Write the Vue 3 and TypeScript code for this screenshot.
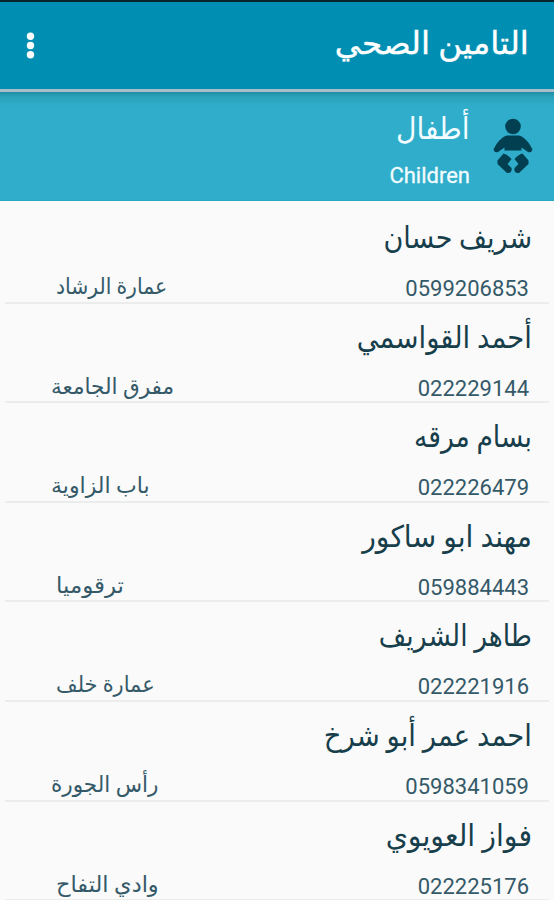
<script setup lang="ts">
interface Contact {
  name: string
  phone: string
  place: string
  inset: number
  nameStretch: number
  placeStretch: number
}

const contacts: Contact[] = [
  { name: 'شريف حسان', phone: '0599206853', place: 'عمارة الرشاد', inset: 56, nameStretch: 0.9, placeStretch: 0.925 },
  { name: 'أحمد القواسمي', phone: '022229144', place: 'مفرق الجامعة', inset: 51, nameStretch: 0.916, placeStretch: 0.98 },
  { name: 'بسام مرقه', phone: '022226479', place: 'باب الزاوية', inset: 51, nameStretch: 0.885, placeStretch: 1 },
  { name: 'مهند ابو ساكور', phone: '059884443', place: 'ترقوميا', inset: 56, nameStretch: 0.942, placeStretch: 1.04 },
  { name: 'طاهر الشريف', phone: '022221916', place: 'عمارة خلف', inset: 56, nameStretch: 0.885, placeStretch: 0.95 },
  { name: 'احمد عمر أبو شرخ', phone: '0598341059', place: 'رأس الجورة', inset: 51, nameStretch: 0.916, placeStretch: 0.98 },
  { name: 'فواز العويوي', phone: '022225176', place: 'وادي التفاح', inset: 56, nameStretch: 0.945, placeStretch: 1.02 },
]
</script>

<template>
  <main class="screen" dir="rtl">
    <header class="bar">
      <h1 class="title">التامين الصحي</h1>
      <svg class="more" viewBox="0 0 10 28" aria-hidden="true">
        <circle cx="5.5" cy="4.2" r="3.7" />
        <circle cx="5.5" cy="13.500" r="3.7" />
        <circle cx="5.5" cy="22.8" r="3.7" />
      </svg>
    </header>
    <section class="category">
      <svg class="baby" viewBox="0 0 40 56" aria-hidden="true">
        <circle cx="20" cy="8.5" r="7.8" />
        <path d="M14 17.500H26C32 19 37 26 39.500 31.500Q38.500 35 35 34L28.500 29.500V32.500H11.500V29.500L5 34Q1.500 35 0.500 31.500C3 26 8 19 14 17.500Z" />
        <path d="M10.500 35.500Q14 36 18.500 41L14.500 46L18.500 50Q19.500 55.500 14 55L4.500 46V42.500Z" />
        <path d="M29.500 35.500Q26 36 21.500 41L25.500 46L21.500 50Q20.500 55.500 26 55L35.500 46V42.500Z" />
      </svg>
      <div class="labels">
        <h2 class="ar">أطفال</h2>
        <p class="en">Children</p>
      </div>
    </section>
    <ul class="list">
      <li v-for="c in contacts" :key="c.phone" class="row">
        <div class="name" :style="{ transform: `scaleX(${c.nameStretch})` }">{{ c.name }}</div>
        <div class="details" :style="{ paddingLeft: c.inset - 5 + 'px' }">
          <span class="phone">{{ c.phone }}</span>
          <span class="place" :style="{ transform: `scaleX(${c.placeStretch})` }">{{ c.place }}</span>
        </div>
      </li>
    </ul>
  </main>
</template>

<style>
body {
  margin: 0;
  background: #fafafa;
}
</style>

<style scoped>
.screen {
  height: 900px;
  overflow: hidden;
  background: #fafafa;
  font-family: Roboto, "Noto Sans", "DejaVu Sans", sans-serif;
  color: #173e4b;
}
h1, h2, p, ul {
  margin: 0;
  padding: 0;
  font-weight: 400;
}
.bar {
  box-sizing: border-box;
  height: 92px;
  padding: 0 25px;
  display: flex;
  align-items: center;
  justify-content: space-between;
  background: #008fb3;
  border-top: 2px solid #07242c;
  border-bottom: 3px solid #a9bdc8;
  color: #fff;
}
.title {
  font-size: 31px;
  line-height: 44px;
  padding-bottom: 4px;
  white-space: nowrap;
  transform: scaleX(1.05);
  transform-origin: right;
  -webkit-text-stroke: 0.4px #fff;
}
.more {
  width: 10px;
  height: 28px;
  fill: #fff;
}
.category {
  box-sizing: border-box;
  height: 109px;
  padding: 16px 21px 0;
  display: flex;
  gap: 23px;
  background: linear-gradient(#1d8fa5 0, #2ba2bb 5px, #2fadca 14px, #2fadca 100%);
  border-bottom: 1px solid #26a9bd;
  color: #f2fcff;
}
.baby {
  width: 40px;
  height: 56px;
  margin-top: 10px;
  fill: #023f50;
}
.ar {
  font-size: 30px;
  line-height: 42px;
  transform: scaleX(0.94);
  transform-origin: right;
}
.en {
  font-size: 22px;
  line-height: 30px;
  margin-top: 10.5px;
  direction: ltr;
  -webkit-text-stroke: 0.3px #f2fcff;
}
.list {
  list-style: none;
  padding: 0 5px;
}
.row {
  box-sizing: border-box;
  height: 99.65px;
  padding-top: 12px;
  border-bottom: 2px solid #ebecec;
}
.row:first-child {
  height: 102.5px;
  padding-top: 15px;
}
.name {
  height: 44px;
  line-height: 44px;
  margin-right: 17px;
  font-size: 30px;
  white-space: nowrap;
  transform-origin: right;
}
.details {
  display: flex;
  justify-content: space-between;
  padding-right: 20px;
  padding-top: 2px;
  height: 54px;
  line-height: 54px;
  font-size: 22px;
  color: #345968;
}
.place {
  margin-top: -2px;
  white-space: nowrap;
  transform-origin: left;
}
</style>
